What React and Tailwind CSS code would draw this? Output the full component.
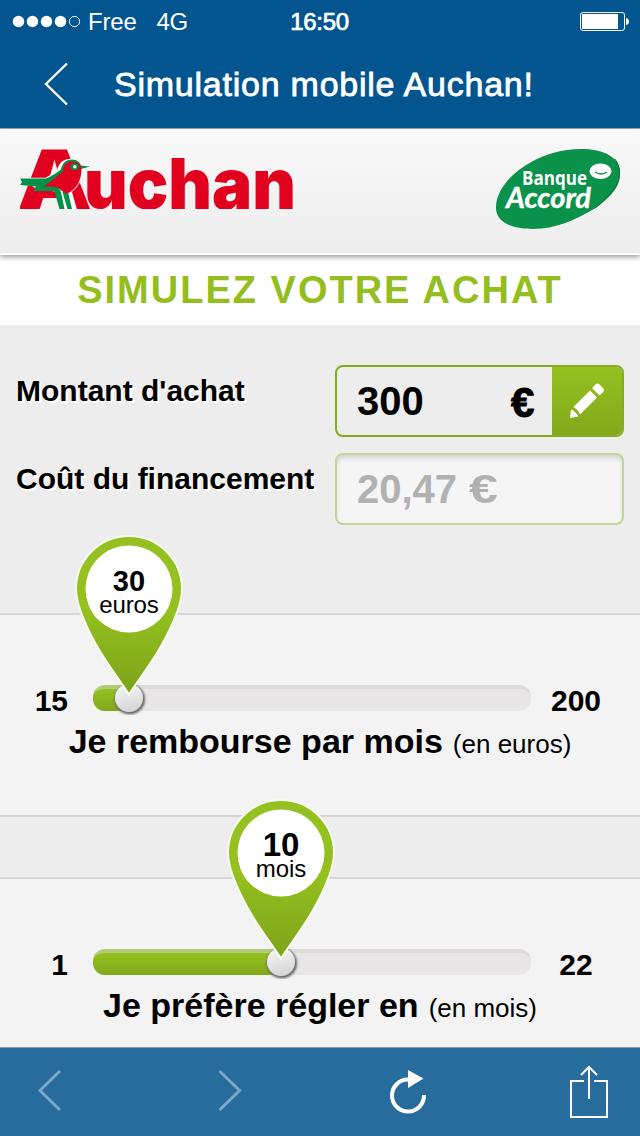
import React, { useState } from "react";

const MONTHLY = { min: 15, max: 200, value: 30, unit: "euros", offset: 36 };
const DURATION = { min: 1, max: 22, value: 10, unit: "mois", offset: 188 };

function StatusBar() {
  return (
    <div className="grid h-10 grid-cols-3 items-center pl-3 pr-[11px] text-white">
      <div className="flex items-center">
        <svg className="h-[14px] w-[70px]" viewBox="0 0 70 14" fill="white">
          <circle cx="6.5" cy="7.5" r="5.7" />
          <circle cx="20.5" cy="7.5" r="5.7" />
          <circle cx="34.5" cy="7.5" r="5.7" />
          <circle cx="48.5" cy="7.5" r="5.7" />
          <circle cx="62.5" cy="7.5" r="5.1" fill="none" stroke="white" />
        </svg>
        <span className="ml-[6px] pt-[2px] text-2xl leading-10 tracking-[-0.2px]">Free</span>
        <span className="ml-5 pt-[2px] text-2xl leading-10 tracking-[-0.4px]">4G</span>
      </div>
      <span className="pt-px pr-[2px] text-center text-2xl leading-10 tracking-[-0.3px] [-webkit-text-stroke:0.7px_white]">16:50</span>
      <svg className="h-5 w-[50px] justify-self-end" viewBox="0 0 50 20">
        <rect x="1.5" y="1.5" width="44" height="18" rx="2.5" fill="none" stroke="white" />
        <rect x="3" y="3" width="36" height="15" rx="0.5" fill="white" />
        <path d="M47 7q3 .5 3 3.500t-3 3.500z" fill="white" />
      </svg>
    </div>
  );
}

function NavBar() {
  return (
    <div className="flex h-[88px] items-center">
      <button className="ml-[43px] h-11 w-[26px]">
        <svg className="h-11 w-[26px]" viewBox="0 0 26 44" fill="none" stroke="white" strokeWidth="2.4">
          <path d="M24 1.500L3 22l21 20.500" />
        </svg>
      </button>
      <h1 className="ml-[45px] whitespace-nowrap text-[34px] leading-[88px] tracking-[0.76px] text-white [-webkit-text-stroke:0.8px_white]">
        Simulation mobile Auchan!
      </h1>
    </div>
  );
}

function AuchanLogo() {
  return (
    <svg className="h-[60px] w-[274px]" viewBox="0 0 274 60">
      <g fill="#e2001f">
        <text x="-1" y="60" fontFamily="Open Sans, sans-serif" fontWeight="800" fontSize="84" textLength="71" lengthAdjust="spacingAndGlyphs">A</text>
        <text x="64" y="60" fontFamily="Inter, sans-serif" fontWeight="900" fontSize="70" textLength="212" lengthAdjust="spacingAndGlyphs">uchan</text>
      </g>
      {/* robin: white halo, green tail, legs and cap, red body */}
      <path
        d="M0 29.500h26c5-3 9-5 12-8 1-7 6-11 13-11 6 0 9 3 11 6l8 1-8 3c0 9-3 16-11 22l5 17.500H42L36 42l-21-4-3-2H0z"
        fill="white"
        stroke="white"
        strokeWidth="1.600"
      />
      <path d="M0 29.500h26c5-2 11-6 15-9 1-6 5-10 11-10 5 0 8 3 9 6l9 1-9 2.500L38 42H13l3-4.500L0 36l2-3z" fill="#009248" />
      <path d="M34 41h6.500l4 19h-5zM42.500 43h5.500l4 17h-4.500z" fill="#009248" />
      <path d="M23 37.500c7-3 11-9 20-15 0-6 3-10 9-10 6 0 9.500 3 9.500 8 0 11-5 20-14 24-4 0-6.500-4-9.500-6-5-1-9-1-15-1z" fill="#e2001f" />
      <ellipse cx="54.500" cy="17.700" rx="4.200" ry="3.300" fill="#009248" />
      <circle cx="54.800" cy="17.700" r="1.700" fill="white" />
    </svg>
  );
}

function BanqueAccordLogo() {
  return (
    <svg className="h-20 w-[124px]" viewBox="0 0 124 80">
      <path
        d="M0 57C1 40 16 23 37 12 50 5 66 0 85 0c21 0 37 7 39 21 2 14-8 27-26 39C79 71 59 80 37 80 15 80-1 73 0 57z"
        fill="#0a914a"
      />
      <path d="M119 10c11 16 1 33-20 49" fill="none" stroke="#176b40" strokeWidth="1" />
      <ellipse cx="104.500" cy="22.300" rx="11" ry="7.700" fill="white" />
      <path d="M99 23q6 4 12 0" fill="none" stroke="#0a914a" strokeWidth="1.500" />
      <g fill="white">
        <text x="26" y="35.500" fontFamily="Open Sans, sans-serif" fontSize="19" fontWeight="700" textLength="65" lengthAdjust="spacingAndGlyphs">Banque</text>
        <text x="10" y="58.500" fontFamily="Lato, sans-serif" fontSize="29" fontWeight="700" fontStyle="italic" textLength="85" lengthAdjust="spacingAndGlyphs" stroke="white" strokeWidth="0.4">Accord</text>
      </g>
    </svg>
  );
}

function PencilIcon() {
  return (
    <svg className="h-9 w-9" viewBox="0 0 36 36" fill="white">
      <path d="M1 35l1-8.500q4 1 7.500 7z" />
      <path d="M4.500 24L21 7.500l7 7-17 17q-2-5-6.500-7.500z" />
      <path d="M23 5l3.500-3.500q2-2 4.500.5l3 3q2 2 0 4L30.500 12.500z" />
    </svg>
  );
}

function Pin({ id, value, unit }) {
  return (
    <div className="absolute -left-[56px] -top-[156px] h-[182px] w-28">
      <svg className="h-full w-full" viewBox="0 0 112 182">
        <defs>
          <linearGradient id={`${id}-pin`} x1="0" y1="0" x2="0" y2="1">
            <stop offset="0.45" stopColor="#94c11f" />
            <stop offset="1" stopColor="#7da31a" />
          </linearGradient>
          <linearGradient id={`${id}-knob`} x1="0" y1="0" x2="0.3" y2="1">
            <stop offset="0" stopColor="#f8f8f8" />
            <stop offset="1" stopColor="#d8d8d8" />
          </linearGradient>
          <filter id={`${id}-soft`}>
            <feGaussianBlur stdDeviation="0.8" />
          </filter>
        </defs>
        <circle cx="56.800" cy="166.300" r="15.300" fill="#6c6c6c" filter={`url(#${id}-soft)`} />
        <circle cx="56" cy="165" r="14" fill={`url(#${id}-knob)`} />
        <path
          d="M56 161.500C45 144 24 119 11 87 5 73 3 65 3 56a53 53 0 01106 0c0 9-2 17-8 31-13 32-34 57-45 74.500z"
          fill={`url(#${id}-pin)`}
          stroke="#f7faef"
          strokeWidth="2"
        />
        <circle cx="56" cy="56" r="43.500" fill="white" />
      </svg>
      <div className="absolute inset-x-0 top-[33px] flex flex-col items-center text-black">
        <span className={unit === "mois" ? "text-[33px] font-bold leading-[30px]" : "text-[29px] font-bold leading-[30px]"}>{value}</span>
        <span className="-mt-[3px] text-2xl leading-[23px] tracking-[-0.1px]">{unit}</span>
      </div>
    </div>
  );
}

function SliderSection({ id, range, label, hint }) {
  return (
    <section className="h-[204px] border-y-2 border-[#d6d6d6] bg-[#f3f3f3] pt-[70px]">
      <div className="flex h-[26px] items-center">
        <span className="w-[93px] pr-[25px] pt-[6px] text-right text-[30px] font-bold leading-[26px]">{range.min}</span>
        <div className="relative h-[26px] w-[438px] rounded-xl border-t-4 border-[#dcdbd8] bg-[#e7e5e6]">
          <div
            className="-mt-1 h-[26px] rounded-l-xl border-t-4 border-[#b1cb7a] bg-gradient-to-b from-[#94c11f] to-[#80a71b]"
            style={{ width: range.offset }}
          />
          <div className="absolute top-0 h-0 w-0" style={{ left: range.offset }}>
            <Pin id={id} value={range.value} unit={range.unit} />
          </div>
        </div>
        <span className="w-[90px] pt-[6px] text-center text-[30px] font-bold leading-[26px]">{range.max}</span>
      </div>
      <p className="mt-[10px] whitespace-nowrap text-center leading-10">
        <span className="text-[34px] font-bold">{label}</span>
        <span className="ml-[10px] text-[26px]">{hint}</span>
      </p>
    </section>
  );
}

function Toolbar() {
  return (
    <nav className="absolute inset-x-0 bottom-0 flex h-[89px] items-start border-t border-[#8f9aa3] bg-[#266c9d] pt-[17px]">
      <button className="ml-[37px] mt-1 opacity-40">
        <svg className="h-[42px] w-6" viewBox="0 0 24 42" fill="none" stroke="white" strokeWidth="3">
          <path d="M23 2L3 21.500 23 41" />
        </svg>
      </button>
      <button className="ml-[157px] mt-1 opacity-40">
        <svg className="h-[42px] w-6" viewBox="0 0 24 42" fill="none" stroke="white" strokeWidth="3">
          <path d="M1.500 2L21.500 21.500 1.500 41" />
        </svg>
      </button>
      <button className="ml-[147px] mt-1">
        <svg className="h-[46px] w-[38px]" viewBox="0 0 38 46">
          <path d="M19 10.500A16 16 0 1035 26" fill="none" stroke="white" strokeWidth="4" />
          <path d="M19 1l15.500 8.500L19 19z" fill="white" />
        </svg>
      </button>
      <button className="ml-[143px]">
        <svg className="h-[54px] w-[38px]" viewBox="0 0 38 54" fill="none" stroke="white" strokeWidth="2">
          <path d="M14 16H1v36h36V16H24M19 34V2M11 10l8-8 8 8" />
        </svg>
      </button>
    </nav>
  );
}

export default function App() {
  const [amount, setAmount] = useState("300");

  return (
    <div className="relative h-[1136px] w-[640px] overflow-hidden bg-[#ededed] font-['Liberation_Sans',Arial,sans-serif] text-black">
      <div className="h-[129px] border-b border-[#a8a8a8] bg-[#03558f]">
        <StatusBar />
        <NavBar />
      </div>

      <header className="relative flex h-[126px] items-start justify-between border-b-2 border-white bg-gradient-to-b from-[#f9f9f9] to-[#ededed] px-5 pt-5 shadow-[0_2px_5px_rgba(0,0,0,0.4)]">
        <AuchanLogo />
        <BanqueAccordLogo />
      </header>

      <h2 className="h-[70px] whitespace-nowrap bg-white text-center text-[38px] font-bold leading-[70px] tracking-[2px] text-[#93be1d]">
        SIMULEZ VOTRE ACHAT
      </h2>

      <form className="flex h-[288px] flex-col gap-4 pl-4 pr-4 pt-10">
        <div className="flex justify-between">
          <label className="whitespace-nowrap text-[30px] font-bold leading-[52px] [text-shadow:2px_2px_0_white]">Montant d'achat</label>
          <div className="flex h-[72px] w-[289px] overflow-hidden rounded-lg border-2 border-[#84ab1b]">
            <input
              value={amount}
              onChange={(e) => setAmount(e.target.value)}
              className="w-[160px] pl-5 text-[40px] font-bold outline-none"
            />
            <span className="w-[55px] pl-[14px] pt-[2px] text-[42px] font-bold leading-[68px] [-webkit-text-stroke:1px_black]">€</span>
            <button type="button" className="flex flex-1 items-center justify-center bg-gradient-to-b from-[#94c11f] to-[#82a91b]">
              <PencilIcon />
            </button>
          </div>
        </div>
        <div className="flex justify-between">
          <label className="whitespace-nowrap text-[30px] font-bold leading-[52px] [text-shadow:2px_2px_0_white]">Coût du financement</label>
          <div className="h-[72px] w-[289px] rounded-lg border-2 border-[#c3d596] bg-[#f5f5f5] pl-5 text-[40px] font-bold leading-[68px] text-[#b1b1b1] shadow-[inset_0_4px_5px_-1px_rgba(0,0,0,0.15)]">
            20,47 <span className="ml-px inline-block origin-left scale-x-[1.3]">€</span>
          </div>
        </div>
      </form>

      <div className="flex flex-col gap-[60px]">
        <SliderSection id="monthly" range={MONTHLY} label="Je rembourse par mois" hint="(en euros)" />
        <SliderSection id="duration" range={DURATION} label="Je préfère régler en" hint="(en mois)" />
      </div>

      <Toolbar />
    </div>
  );
}
